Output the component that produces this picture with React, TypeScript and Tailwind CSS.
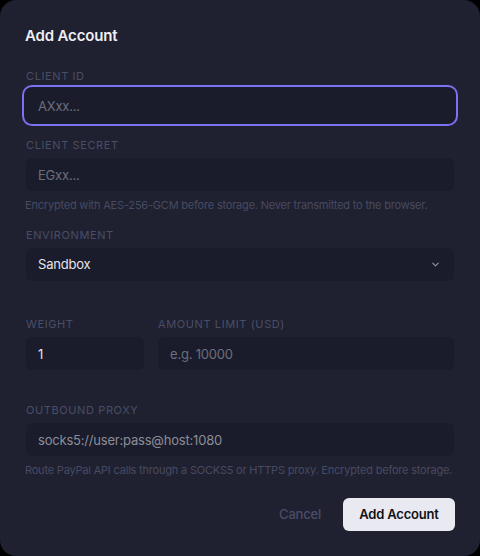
import React from "react";
import { ChevronDown } from "lucide-react";

const labelCls =
  "block text-[11px] leading-[14px] tracking-[0.055em] uppercase text-[#4a4d66] mb-[6px]";
const inputCls =
  "w-full h-[33px] rounded-md bg-[#1a1c2b] px-3 text-[13px] tracking-[-0.2px] text-[#e4e4ea] placeholder:text-[#6c6e7e] outline-none";
const helpCls = "text-[11px] leading-[16px] tracking-[-0.2px] text-[#474a62]";

export default function App() {
  return (
    <div className="min-h-[556px] w-[480px] bg-black" style={{ fontFamily: "Inter, 'Noto Sans', sans-serif" }}>
      <div className="h-[556px] w-[480px] rounded-2xl bg-[#1f2130] px-[26px] pt-[26px]">
        <h2 className="text-[15px] leading-[20px] font-semibold tracking-[-0.15px] text-[#eeeef3] -ml-px">Add Account</h2>

        <div className="mt-[23px]">
          <label className={labelCls}>Client ID</label>
          <input
            className={inputCls + " ring-2 ring-[#7a72f0] ring-offset-2 ring-offset-[#1a1c2b]"}
            placeholder="AXxx..."
          />
        </div>

        <div className="mt-[16px]">
          <label className={labelCls}>Client Secret</label>
          <input className={inputCls} placeholder="EGxx..." />
          <p className={helpCls + " mt-[6px] -ml-px"}>
            Encrypted with AES-256-GCM before storage. Never transmitted to the browser.
          </p>
        </div>

        <div className="mt-[15px]">
          <label className={labelCls}>Environment</label>
          <div className="flex h-[33px] items-center justify-between rounded-md bg-[#1a1c2b] pl-3 pr-[13px]">
            <span className="text-[13px] tracking-[-0.2px] text-[#e4e4ea]">Sandbox</span>
            <ChevronDown size={11} strokeWidth={2.5} className="text-[#8e90a4]" />
          </div>
        </div>

        <div className="mt-[36px] grid grid-cols-[118px_1fr] gap-x-[14px]">
          <div>
            <label className={labelCls}>Weight</label>
            <input className={inputCls} defaultValue="1" />
          </div>
          <div>
            <label className={labelCls}>Amount Limit (USD)</label>
            <input className={inputCls} placeholder="e.g. 10000" />
          </div>
        </div>

        <div className="mt-[33px]">
          <label className={labelCls}>Outbound Proxy</label>
          <input
            className={inputCls + " placeholder:text-[#8c8d98]"}
            placeholder="socks5://user:pass@host:1080"
          />
          <p className={helpCls + " mt-[6px] -ml-px"}>
            Route PayPal API calls through a SOCKS5 or HTTPS proxy. Encrypted before storage.
          </p>
        </div>

        <div className="mt-[20px] flex justify-end items-center gap-[10px] -mr-px">
          <button className="h-[33px] px-3 text-[13px] font-medium tracking-[-0.2px] text-[#4a4d66]">Cancel</button>
          <button className="h-[33px] w-[112px] rounded-md bg-[#e9e9f1] text-[13px] font-semibold tracking-[-0.2px] text-[#111218]">
            Add Account
          </button>
        </div>
      </div>
    </div>
  );
}
